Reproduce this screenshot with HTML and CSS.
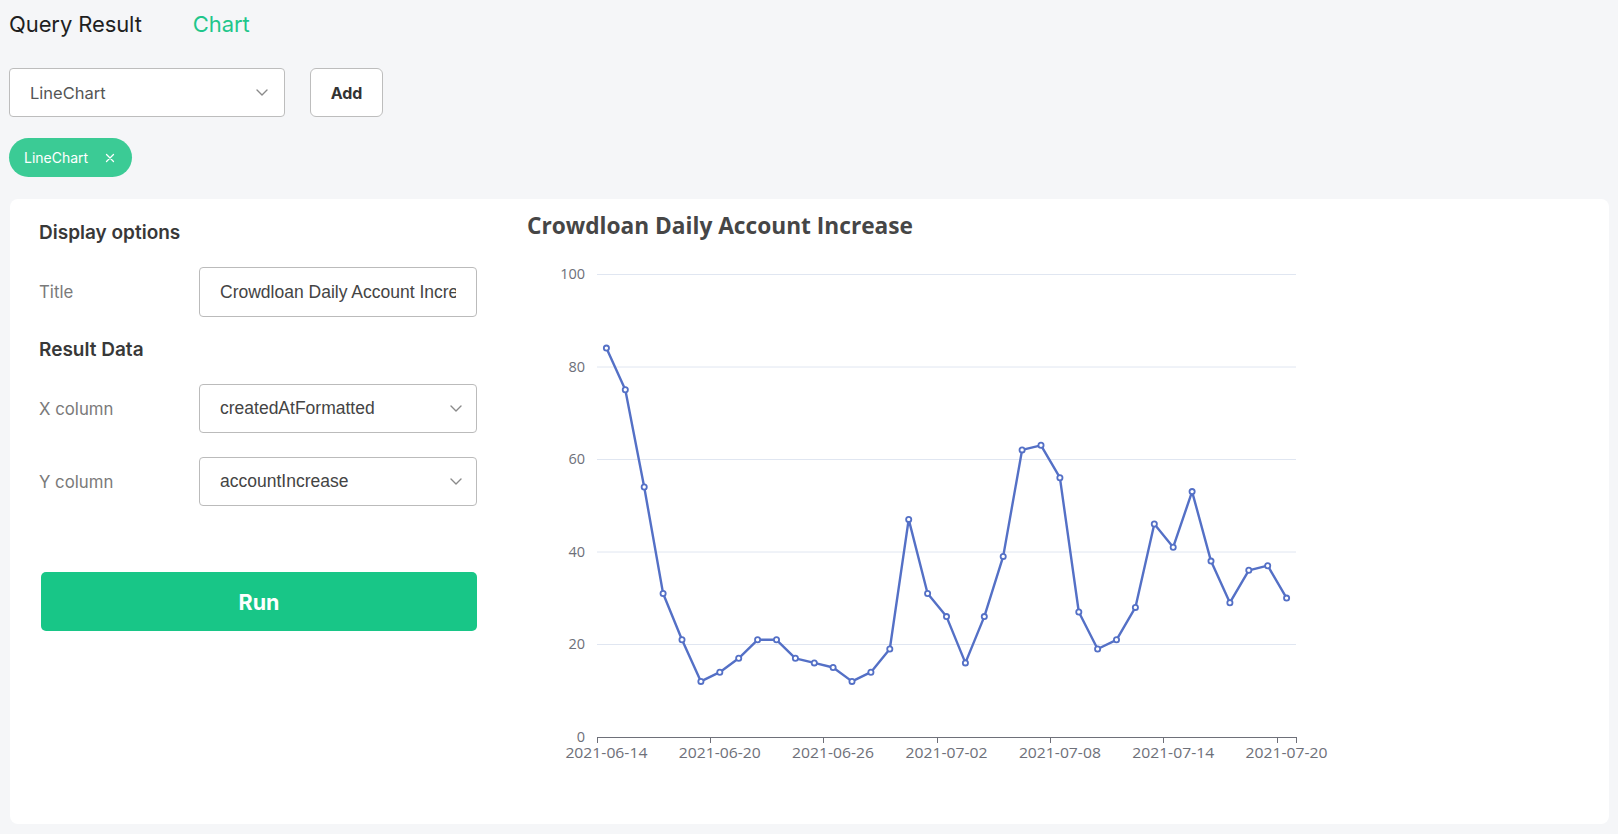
FILE: index.html
```html
<!DOCTYPE html>
<html lang="en">
<head>
<meta charset="utf-8">
<title>Chart</title>
<link rel="stylesheet" href="styles.css">
</head>
<body>
<div class="tabs">
  <span class="tab">Query Result</span>
  <span class="tab active">Chart</span>
</div>
<div class="toolbar">
  <div class="select select-type">
    <span class="select-text">LineChart</span>
    <svg class="chev" viewBox="0 0 12 7" width="12" height="7"><path d="M1 1l5 5 5-5" fill="none" stroke="#8a8a8a" stroke-width="1.4" stroke-linecap="round" stroke-linejoin="round"/></svg>
  </div>
  <button class="btn-add">Add</button>
</div>
<div class="chips">
  <span class="chip">LineChart<svg class="chip-x" viewBox="0 0 10 10" width="10" height="10"><path d="M1.5 1.5l7 7M8.5 1.5l-7 7" stroke="#fff" stroke-width="1.3" stroke-linecap="round"/></svg></span>
</div>
<div class="panel">
  <div class="options">
    <h3 class="section first">Display options</h3>
    <div class="row">
      <label class="label">Title</label>
      <input class="field input" type="text" value="Crowdloan Daily Account Increase">
    </div>
    <h3 class="section second">Result Data</h3>
    <div class="row row-x">
      <label class="label">X column</label>
      <div class="field select">
        <span class="select-text">createdAtFormatted</span>
        <svg class="chev" viewBox="0 0 12 7" width="12" height="7"><path d="M1 1l5 5 5-5" fill="none" stroke="#8a8a8a" stroke-width="1.4" stroke-linecap="round" stroke-linejoin="round"/></svg>
      </div>
    </div>
    <div class="row row-y">
      <label class="label">Y column</label>
      <div class="field select">
        <span class="select-text">accountIncrease</span>
        <svg class="chev" viewBox="0 0 12 7" width="12" height="7"><path d="M1 1l5 5 5-5" fill="none" stroke="#8a8a8a" stroke-width="1.4" stroke-linecap="round" stroke-linejoin="round"/></svg>
      </div>
    </div>
    <button class="run">Run</button>
  </div>
  <div class="chart">
    <svg class="chart-svg" width="820" height="600" viewBox="0 0 820 600">
      <text class="chart-title" x="17" y="35">Crowdloan Daily Account Increase</text>
      <g class="grid" stroke="#E0E6F1" stroke-width="1">
        <line x1="87" y1="75.5" x2="786" y2="75.5"/>
        <line x1="87" y1="168" x2="786" y2="168"/>
        <line x1="87" y1="260.5" x2="786" y2="260.5"/>
        <line x1="87" y1="353" x2="786" y2="353"/>
        <line x1="87" y1="445.5" x2="786" y2="445.5"/>
      </g>
      <g class="ylab">
        <text x="75" y="80">100</text>
        <text x="75" y="173">80</text>
        <text x="75" y="265">60</text>
        <text x="75" y="358">40</text>
        <text x="75" y="450">20</text>
        <text x="75" y="543">0</text>
      </g>
      <g stroke="#6E7079" stroke-width="1">
        <line x1="87" y1="538.5" x2="786" y2="538.5"/>
        <line x1="87.5" y1="538" x2="87.5" y2="544"/>
        <line x1="200.5" y1="538" x2="200.5" y2="544"/>
        <line x1="313.5" y1="538" x2="313.5" y2="544"/>
        <line x1="427.5" y1="538" x2="427.5" y2="544"/>
        <line x1="540.5" y1="538" x2="540.5" y2="544"/>
        <line x1="653.5" y1="538" x2="653.5" y2="544"/>
        <line x1="767.5" y1="538" x2="767.5" y2="544"/>
        <line x1="786.5" y1="538" x2="786.5" y2="544"/>
      </g>
      <g class="xlab">
        <text x="96.4" y="559" textLength="82" lengthAdjust="spacingAndGlyphs">2021-06-14</text>
        <text x="209.8" y="559" textLength="82" lengthAdjust="spacingAndGlyphs">2021-06-20</text>
        <text x="323.1" y="559" textLength="82" lengthAdjust="spacingAndGlyphs">2021-06-26</text>
        <text x="436.5" y="559" textLength="82" lengthAdjust="spacingAndGlyphs">2021-07-02</text>
        <text x="549.9" y="559" textLength="82" lengthAdjust="spacingAndGlyphs">2021-07-08</text>
        <text x="663.2" y="559" textLength="82" lengthAdjust="spacingAndGlyphs">2021-07-14</text>
        <text x="776.6" y="559" textLength="82" lengthAdjust="spacingAndGlyphs">2021-07-20</text>
      </g>
      <polyline class="series" points="96.4,149.1 115.3,190.7 134.2,288 153.1,394.5 172,440.8 190.9,482.4 209.8,473.2 228.7,459.3 247.6,440.8 266.5,440.8 285.4,459.3 304.3,463.9 323.1,468.5 342,482.4 360.9,473.2 379.8,450 398.7,320.4 417.6,394.5 436.5,417.6 455.4,463.9 474.3,417.6 493.2,357.4 512.1,250.9 531,246.3 549.9,278.7 568.8,413 587.6,450 606.5,440.8 625.4,408.4 644.3,325 663.2,348.2 682.1,292.6 701,362.1 719.9,403.7 738.8,371.3 757.7,366.7 776.6,399.1"/>
      <g class="dots">
        <circle cx="96.4" cy="149.1" r="2.6"/><circle cx="115.3" cy="190.7" r="2.6"/><circle cx="134.2" cy="288" r="2.6"/><circle cx="153.1" cy="394.5" r="2.6"/><circle cx="172" cy="440.8" r="2.6"/><circle cx="190.9" cy="482.4" r="2.6"/><circle cx="209.8" cy="473.2" r="2.6"/><circle cx="228.7" cy="459.3" r="2.6"/><circle cx="247.6" cy="440.8" r="2.6"/><circle cx="266.5" cy="440.8" r="2.6"/><circle cx="285.4" cy="459.3" r="2.6"/><circle cx="304.3" cy="463.9" r="2.6"/><circle cx="323.1" cy="468.5" r="2.6"/><circle cx="342" cy="482.4" r="2.6"/><circle cx="360.9" cy="473.2" r="2.6"/><circle cx="379.8" cy="450" r="2.6"/><circle cx="398.7" cy="320.4" r="2.6"/><circle cx="417.6" cy="394.5" r="2.6"/><circle cx="436.5" cy="417.6" r="2.6"/><circle cx="455.4" cy="463.9" r="2.6"/><circle cx="474.3" cy="417.6" r="2.6"/><circle cx="493.2" cy="357.4" r="2.6"/><circle cx="512.1" cy="250.9" r="2.6"/><circle cx="531" cy="246.3" r="2.6"/><circle cx="549.9" cy="278.7" r="2.6"/><circle cx="568.8" cy="413" r="2.6"/><circle cx="587.6" cy="450" r="2.6"/><circle cx="606.5" cy="440.8" r="2.6"/><circle cx="625.4" cy="408.4" r="2.6"/><circle cx="644.3" cy="325" r="2.6"/><circle cx="663.2" cy="348.2" r="2.6"/><circle cx="682.1" cy="292.6" r="2.6"/><circle cx="701" cy="362.1" r="2.6"/><circle cx="719.9" cy="403.7" r="2.6"/><circle cx="738.8" cy="371.3" r="2.6"/><circle cx="757.7" cy="366.7" r="2.6"/><circle cx="776.6" cy="399.1" r="2.6"/>
      </g>
    </svg>
  </div>
</div>
</body>
</html>
```
FILE: styles.css
```css
* { box-sizing: border-box; }
html, body { margin: 0; padding: 0; }
body {
  background: #f5f6f8;
  font-family: Inter, "Noto Sans", sans-serif;
  color: #222;
  width: 1618px;
  height: 834px;
  overflow: hidden;
}
.tabs {
  display: flex;
  gap: 51px;
  padding: 11px 0 0 9px;
  height: 37px;
}
.tab {
  font-size: 22px;
  line-height: 26px;
  color: #1f1f1f;
  letter-spacing: -0.1px;
}
.tab.active { color: #1fc68b; }
.toolbar {
  display: flex;
  align-items: center;
  gap: 25px;
  margin: 31px 0 0 9px;
}
.select {
  display: flex;
  align-items: center;
  justify-content: space-between;
  background: #fff;
  border: 1px solid #bdbdbd;
  border-radius: 4px;
}
.select-type {
  width: 276px;
  height: 49px;
  padding: 0 16px 0 20px;
  font-size: 16.5px;
  color: #555;
}
.btn-add {
  width: 73px;
  height: 49px;
  background: #fff;
  border: 1px solid #bdbdbd;
  border-radius: 6px;
  font-family: Inter, sans-serif;
  font-weight: 700;
  font-size: 16px;
  color: #333;
  padding: 0;
}
.chips {
  margin: 21px 0 0 9px;
  display: flex;
}
.chip {
  display: inline-flex;
  align-items: center;
  height: 39px;
  width: 123px;
  padding-left: 15px;
  border-radius: 20px;
  background: #3bcb95;
  color: #fff;
  font-size: 14px;
}
.chip-x { margin-left: 17px; }
.panel {
  display: flex;
  gap: 33px;
  margin: 22px 0 0 10px;
  width: 1599px;
  height: 625px;
  background: #fff;
  border-radius: 8px;
  padding-left: 29px;
}
.options {
  width: 438px;
  padding-top: 23px;
  display: flex;
  flex-direction: column;
}
.section {
  margin: 0;
  font-size: 19px;
  line-height: 22px;
  font-weight: 600;
  color: #383838;
}
.section.second { margin-top: 22px; }
.row {
  display: flex;
  align-items: center;
  margin-top: 23px;
}
.row-y { margin-top: 24px; }
.label {
  width: 160px;
  font-size: 16.8px;
  color: #7a7a7a;
}
.field {
  width: 278px;
  height: 50px;
  background: #fff;
  border: 1px solid #bbb;
  border-radius: 4px;
  font-family: "Liberation Sans", Arial, sans-serif;
  font-size: 17.5px;
  color: #444;
}
.input {
  padding: 0 20px;
  outline: none;
}
.row .select {
  height: 49px;
  padding: 0 14px 0 20px;
}
.run {
  margin-top: 66px;
  width: 436px;
  height: 59px;
  margin-left: 2px;
  border: none;
  border-radius: 5px;
  background: #18c687;
  color: #fff;
  font-family: Inter, sans-serif;
  font-weight: 700;
  font-size: 21.5px;
}
.chart { width: 820px; }
.chart-svg { display: block; }
.chart-title {
  font-family: "Open Sans", sans-serif;
  font-weight: 700;
  font-size: 22.7px;
  fill: #464646;
}
.ylab text {
  font-family: "Open Sans", sans-serif;
  font-size: 14.5px;
  fill: #6e7079;
  text-anchor: end;
}
.xlab text {
  font-family: "Open Sans", sans-serif;
  font-size: 14.5px;
  fill: #6e7079;
  text-anchor: middle;
}
.series {
  fill: none;
  stroke: #5470c6;
  stroke-width: 2.4;
  stroke-linejoin: round;
}
.dots circle {
  fill: #fff;
  stroke: #5470c6;
  stroke-width: 1.8;
}
```
